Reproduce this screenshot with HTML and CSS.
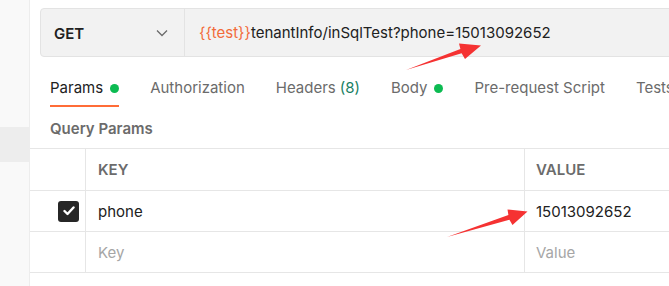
FILE: index.html
```html
<html>
  <head>
    <title>Query params</title>
    <link rel="stylesheet" href="styles.css">
  </head>
  <body>
    <div class="page">
      <div class="sidebar">
        <div class="side-item"></div>
      </div>
      <div class="main">
        <div class="urlbar">
          <div class="method">
            <span>GET</span>
            <svg class="chevron" width="12" height="8" viewBox="0 0 12 8"><path d="M1 1.5 L6 6.5 L11 1.5" fill="none" stroke="#6b6b6b" stroke-width="1.3"/></svg>
          </div>
          <div class="url"><span class="var">{{test}}</span>tenantInfo/inSqlTest?phone=15013092652</div>
        </div>
        <div class="tabs">
          <div class="tab active">Params <span class="dot"></span></div>
          <div class="tab">Authorization</div>
          <div class="tab">Headers <span class="count">(8)</span></div>
          <div class="tab">Body <span class="dot"></span></div>
          <div class="tab">Pre-request Script</div>
          <div class="tab">Tests</div>
        </div>
        <div class="section-title">Query Params</div>
        <div class="table">
          <div class="row head">
            <div class="cell check"></div>
            <div class="cell key">KEY</div>
            <div class="cell value">VALUE</div>
          </div>
          <div class="row">
            <div class="cell check">
              <span class="box"><svg width="12" height="10" viewBox="0 0 12 10"><path d="M1.5 5 L4.5 8 L10.5 1.5" fill="none" stroke="#fff" stroke-width="2.4" stroke-linecap="round" stroke-linejoin="round"/></svg></span>
            </div>
            <div class="cell key">phone</div>
            <div class="cell value">15013092652</div>
          </div>
          <div class="row">
            <div class="cell check"></div>
            <div class="cell key placeholder">Key</div>
            <div class="cell value placeholder">Value</div>
          </div>
        </div>
      </div>
    </div>
    <svg class="marks" width="669" height="286" viewBox="0 0 669 286">
      <polygon fill="#f53232" points="406,70 461.6,53.2 465,59 481,45.5 459,43.5 460.4,49"/>
      <polygon fill="#f53232" points="447,237 509.4,219.8 512.5,225 527.5,211.5 507.5,209.4 508.4,215"/>
    </svg>
  </body>
</html>
```

FILE: styles.css
```css
body {
  margin: 0;
  font-family: Inter, "Noto Sans", sans-serif;
  font-size: 15px;
  color: #212121;
  overflow: hidden;
}
.page { display: flex; height: 286px; }
.sidebar {
  width: 29px;
  flex: none;
  background: #f9f9f9;
  border-right: 1px solid #ededed;
}
.side-item { margin-top: 127px; height: 35px; background: #ededed; }
.main { flex: 1; overflow: hidden; padding-top: 8px; }

.urlbar {
  display: flex;
  margin-left: 10px;
  width: 800px;
  height: 47px;
  background: #f2f2f2;
  border: 1px solid #e3e3e3;
  border-radius: 4px;
}
.method {
  width: 130px;
  padding: 0 0 0 13px;
  display: flex;
  align-items: center;
  justify-content: space-between;
  border-right: 1px solid #e3e3e3;
  font-weight: 600;
  font-size: 15px;
}
.method span { margin-top: 1px; }
.chevron { margin-right: 16px; }
.url {
  display: flex;
  align-items: center;
  padding-left: 14px;
}
.var { color: #f26b3a; }

.tabs {
  display: flex;
  gap: 31px;
  margin: 21px 0 0 20px;
  white-space: nowrap;
}
.tab {
  line-height: 20px;
  padding-bottom: 7px;
  border-bottom: 2px solid transparent;
  color: #6b6b6b;
  display: flex;
  align-items: center;
  gap: 7px;
}
.tab.active { color: #212121; border-bottom-color: #ff6c37; }
.dot { width: 9px; height: 9px; border-radius: 50%; background: #0cbb52; }
.count { color: #1a7f64; margin-left: -3px; }

.section-title {
  padding: 12px 0 9px 20px;
  line-height: 20px;
  font-weight: 600;
  color: #6b6b6b;
}

.table { border-top: 1px solid #e6e6e6; width: 800px; }
.row {
  display: flex;
  height: 40px;
  border-bottom: 1px solid #e6e6e6;
}
.row.head { height: 41px; }
.cell { display: flex; align-items: center; }
.check {
  width: 56px;
  justify-content: flex-end;
  padding-right: 6px;
  box-sizing: border-box;
  border-right: 1px solid #e6e6e6;
}
.key { width: 439px; padding-left: 12px; box-sizing: border-box; border-right: 1px solid #e6e6e6; }
.value { padding-left: 11px; }
.head .cell { font-weight: 600; color: #6b6b6b; }
.placeholder { color: #a6a6a6; }
.box {
  width: 21px;
  height: 21px;
  border-radius: 3px;
  background: #262626;
  display: flex;
  align-items: center;
  justify-content: center;
}

.marks { position: absolute; left: 0; top: 0; pointer-events: none; }
```
